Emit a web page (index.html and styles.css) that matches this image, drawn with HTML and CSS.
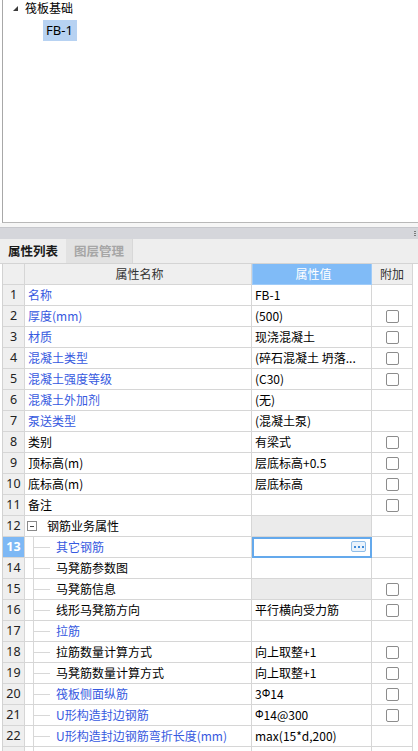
FILE: index.html
```html
<!DOCTYPE html>
<html lang="zh">
<head>
<meta charset="utf-8">
<link rel="stylesheet" href="styles.css">
</head>
<body>
<div class="tree-panel">
  <div class="tree-node">
    <span class="tri"></span><span class="tree-label">筏板基础</span>
  </div>
  <div class="tree-child"><span class="sel">FB-1</span></div>
</div>
<div class="gap"></div>
<div class="splitter"><span class="grip"></span></div>
<div class="tabs">
  <div class="tab active">属性列表</div>
  <div class="tab">图层管理</div>
</div>
<div class="grid">
  <div class="row head">
    <div class="c num"></div>
    <div class="c name hc">属性名称</div>
    <div class="c val hv">属性值</div>
    <div class="c add hc">附加</div>
  </div>

  <div class="row"><div class="c num">1</div><div class="c name blue">名称</div><div class="c val">FB-1</div><div class="c add"></div></div>
  <div class="row"><div class="c num">2</div><div class="c name blue">厚度(mm)</div><div class="c val">(500)</div><div class="c add"><span class="cb"></span></div></div>
  <div class="row"><div class="c num">3</div><div class="c name blue">材质</div><div class="c val">现浇混凝土</div><div class="c add"><span class="cb"></span></div></div>
  <div class="row"><div class="c num">4</div><div class="c name blue">混凝土类型</div><div class="c val">(碎石混凝土 坍落...</div><div class="c add"><span class="cb"></span></div></div>
  <div class="row"><div class="c num">5</div><div class="c name blue">混凝土强度等级</div><div class="c val">(C30)</div><div class="c add"><span class="cb"></span></div></div>
  <div class="row"><div class="c num">6</div><div class="c name blue">混凝土外加剂</div><div class="c val">(无)</div><div class="c add"></div></div>
  <div class="row"><div class="c num">7</div><div class="c name blue">泵送类型</div><div class="c val">(混凝土泵)</div><div class="c add"></div></div>
  <div class="row"><div class="c num">8</div><div class="c name">类别</div><div class="c val">有梁式</div><div class="c add"><span class="cb"></span></div></div>
  <div class="row"><div class="c num">9</div><div class="c name">顶标高(m)</div><div class="c val">层底标高+0.5</div><div class="c add"><span class="cb"></span></div></div>
  <div class="row"><div class="c num">10</div><div class="c name">底标高(m)</div><div class="c val">层底标高</div><div class="c add"><span class="cb"></span></div></div>
  <div class="row"><div class="c num">11</div><div class="c name">备注</div><div class="c val"></div><div class="c add"><span class="cb"></span></div></div>
  <div class="row"><div class="c num">12</div><div class="c name group"><span class="minus"></span>钢筋业务属性</div><div class="c val gray"></div><div class="c add"></div></div>
  <div class="row"><div class="c num cur">13</div><div class="c name sub blue">其它钢筋</div><div class="c val edit"><span class="dots"><i></i><i></i><i></i></span></div><div class="c add"></div></div>
  <div class="row"><div class="c num">14</div><div class="c name sub">马凳筋参数图</div><div class="c val"></div><div class="c add"></div></div>
  <div class="row"><div class="c num">15</div><div class="c name sub">马凳筋信息</div><div class="c val gray"></div><div class="c add"><span class="cb"></span></div></div>
  <div class="row"><div class="c num">16</div><div class="c name sub">线形马凳筋方向</div><div class="c val">平行横向受力筋</div><div class="c add"><span class="cb"></span></div></div>
  <div class="row"><div class="c num">17</div><div class="c name sub blue">拉筋</div><div class="c val"></div><div class="c add"></div></div>
  <div class="row"><div class="c num">18</div><div class="c name sub">拉筋数量计算方式</div><div class="c val">向上取整+1</div><div class="c add"><span class="cb"></span></div></div>
  <div class="row"><div class="c num">19</div><div class="c name sub">马凳筋数量计算方式</div><div class="c val">向上取整+1</div><div class="c add"><span class="cb"></span></div></div>
  <div class="row"><div class="c num">20</div><div class="c name sub blue">筏板侧面纵筋</div><div class="c val">3<span class="rb">Ф</span>14</div><div class="c add"><span class="cb"></span></div></div>
  <div class="row"><div class="c num">21</div><div class="c name sub blue">U形构造封边钢筋</div><div class="c val"><span class="rb">Ф</span>14@300</div><div class="c add"><span class="cb"></span></div></div>
  <div class="row"><div class="c num">22</div><div class="c name sub blue">U形构造封边钢筋弯折长度(mm)</div><div class="c val">max(15*d,200)</div><div class="c add"></div></div>
  <div class="row"><div class="c num">23</div><div class="c name sub">归类名称</div><div class="c val">(FB-1)</div><div class="c add"><span class="cb"></span></div></div>
</div>
</body>
</html>
```
FILE: styles.css
```css
html, body {
  margin: 0;
  padding: 0;
  background: #ffffff;
  overflow: hidden;
}
body {
  width: 418px;
  height: 751px;
  font-family: "Noto Sans CJK SC", "Noto Sans", sans-serif;
  font-size: 12px;
  color: #000;
}
.tree-panel {
  margin-left: 2px;
  border-left: 1px solid #a8a8a8;
  border-bottom: 1px solid #b8b8b8;
  box-sizing: border-box;
  height: 223px;
  padding-top: 1px;
}
.tree-node {
  display: flex;
  align-items: center;
  height: 14px;
  padding-left: 10px;
}
.tri {
  width: 0;
  height: 0;
  border-left: 5px solid transparent;
  border-bottom: 5px solid #3a3a3a;
  margin-right: 7px;
  margin-top: 1px;
}
.tree-label {
  line-height: 14px;
}
.tree-child {
  padding-left: 40px;
  padding-top: 5px;
}
.sel {
  display: inline-block;
  background: #b7d2f2;
  padding: 0 4px 0 3px;
  height: 21px;
  line-height: 21px;
  font-family: "Noto Sans", sans-serif;
  font-size: 13px;
}
.gap {
  height: 4px;
  background: #f6f6f6;
}
.splitter {
  height: 11px;
  background: #d5d6db;
  border-top: 1px solid #c6c7cc;
  position: relative;
}
.grip {
  position: absolute;
  right: 2px;
  top: 3px;
  width: 2px;
  height: 6px;
  background: repeating-linear-gradient(#7a7a7a 0 1px, transparent 1px 2px);
}
.tabs {
  display: flex;
  height: 24px;
  background: #eeeeee;
  border-bottom: 1px solid #d4d4d4;
}
.tab {
  width: 66px;
  line-height: 24px;
  text-align: center;
  font-weight: bold;
  font-size: 12.5px;
  color: #a6a6a6;
  background: #e2e2e2;
  border-right: 1px solid #d8d8d8;
}
.tab.active {
  color: #1a1a1a;
  background: #eeeeee;
  border-right: none;
}
.grid {
  margin-left: 2px;
  width: 412px;
  border-left: 1px solid #d2d2d2;
}
.row {
  display: grid;
  grid-template-columns: 22px 227px 120px 41px;
  height: 21px;
}
.c {
  box-sizing: border-box;
  height: 21px;
  border-right: 1px solid #d6d6d6;
  border-bottom: 1px solid #d6d6d6;
  line-height: 20px;
  white-space: nowrap;
  overflow: hidden;
  position: relative;
}
.num {
  background: #efefef;
  text-align: center;
  font-family: "Noto Sans", sans-serif;
  font-size: 12.5px;
  color: #222;
}
.num.cur {
  background: #7db8f5;
  color: #ffffff;
  font-weight: bold;
}
.head .c {
  background: #efefef;
  color: #333;
  text-align: center;
}
.head .hv {
  background: #80bbf7;
  color: #ffffff;
  border: 1px solid #9fcbf8;
  border-top: none;
  line-height: 20px;
}
.name {
  padding-left: 3px;
}
.blue {
  color: #3659e0;
}
.val {
  padding-left: 3px;
}
.add {
  display: flex;
  align-items: center;
  justify-content: center;
}
.cb {
  width: 13px;
  height: 13px;
  border: 1px solid #8c8c8c;
  border-radius: 2px;
  background: #fff;
  box-sizing: border-box;
  margin-left: 1px;
}
.gray {
  background: #ebebeb;
}
.group {
  display: flex;
  align-items: center;
  padding-left: 2px;
}
.minus {
  width: 10px;
  height: 10px;
  border: 1px solid #8a8a8a;
  box-sizing: border-box;
  margin-right: 10px;
  position: relative;
  background: #fff;
}
.minus::after {
  content: "";
  position: absolute;
  left: 2px;
  right: 2px;
  top: 3.5px;
  height: 1px;
  background: #444;
}
.sub {
  padding-left: 31px;
}
.sub::before {
  content: "";
  position: absolute;
  left: 8px;
  top: 0;
  bottom: -1px;
  width: 1px;
  background: #d8d8d8;
}
.sub::after {
  content: "";
  position: absolute;
  left: 8px;
  width: 17px;
  top: 10px;
  height: 1px;
  background: #d8d8d8;
}
.edit {
  outline: 2px solid #64a9ec;
  outline-offset: -2px;
}
.dots {
  position: absolute;
  right: 5px;
  top: 4px;
  width: 15px;
  height: 11px;
  box-sizing: border-box;
  border: 1px solid #8fbde8;
  border-radius: 2px;
  background: #eaf3fc;
  display: flex;
  align-items: center;
  justify-content: center;
  gap: 2px;
}
.dots i {
  width: 2px;
  height: 2px;
  background: #3f8ad8;
}
.rb {
  font-size: 10px;
  vertical-align: 2px;
  font-family: "DejaVu Sans", sans-serif;
}
```
